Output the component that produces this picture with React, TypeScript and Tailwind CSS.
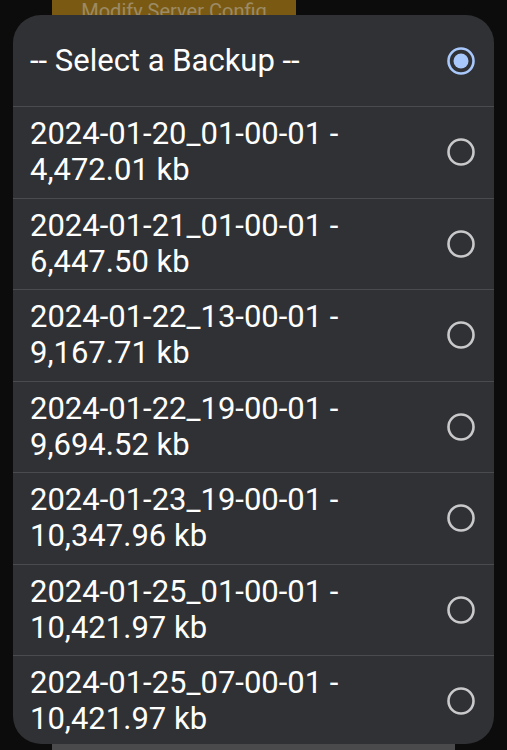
import React from "react";

const items = [
  ["2024-01-20_01-00-01 -", "4,472.01 kb"],
  ["2024-01-21_01-00-01 -", "6,447.50 kb"],
  ["2024-01-22_13-00-01 -", "9,167.71 kb"],
  ["2024-01-22_19-00-01 -", "9,694.52 kb"],
  ["2024-01-23_19-00-01 -", "10,347.96 kb"],
  ["2024-01-25_01-00-01 -", "10,421.97 kb"],
  ["2024-01-25_07-00-01 -", "10,421.97 kb"],
];

function Radio({ selected }: { selected?: boolean }) {
  return (
    <svg width="32" height="32" viewBox="0 0 32 32" className="shrink-0">
      {selected ? (
        <>
          <circle cx="16" cy="16" r="12.5" fill="none" stroke="#a8c7fa" strokeWidth="2.6" />
          <circle cx="16" cy="16" r="7.5" fill="#a8c7fa" />
        </>
      ) : (
        <circle cx="16" cy="16" r="12.5" fill="none" stroke="#c9c9cb" strokeWidth="2.6" />
      )}
    </svg>
  );
}

export default function App() {
  return (
    <div
      className="w-[507px] h-[750px] overflow-hidden bg-[#0c0c0c] relative"
      style={{ fontFamily: "Roboto, 'Noto Sans', sans-serif" }}
    >
      <div className="absolute left-[52px] top-[-20px] w-[244px] h-[60px] bg-[#7a5a12] flex items-start justify-center pt-[19px]">
        <span className="text-[20px] leading-[24px] text-[#9c8a66] whitespace-nowrap">Modify Server Config</span>
      </div>
      <div className="absolute left-[52px] top-[740px] w-[403px] h-[20px] bg-[#4a4a4c]" />
      <div className="absolute left-[13px] top-[15px] w-[481px] h-[729px] bg-[#303134] rounded-[28px] overflow-hidden flex flex-col">
        <div className="h-[91px] shrink-0 flex items-center justify-between pl-[17px] pr-[17px]">
          <span className="text-[31px] leading-[36px] text-white">-- Select a Backup --</span>
          <Radio selected />
        </div>
        {items.map(([a, b], i) => (
          <div
            key={i}
            className="h-[91.5px] shrink-0 border-t border-[#4a4b4e] flex items-center justify-between pl-[17px] pr-[17px]"
          >
            <div className="text-[31px] leading-[36px] text-white">
              <div>{a}</div>
              <div>{b}</div>
            </div>
            <Radio />
          </div>
        ))}
      </div>
    </div>
  );
}
